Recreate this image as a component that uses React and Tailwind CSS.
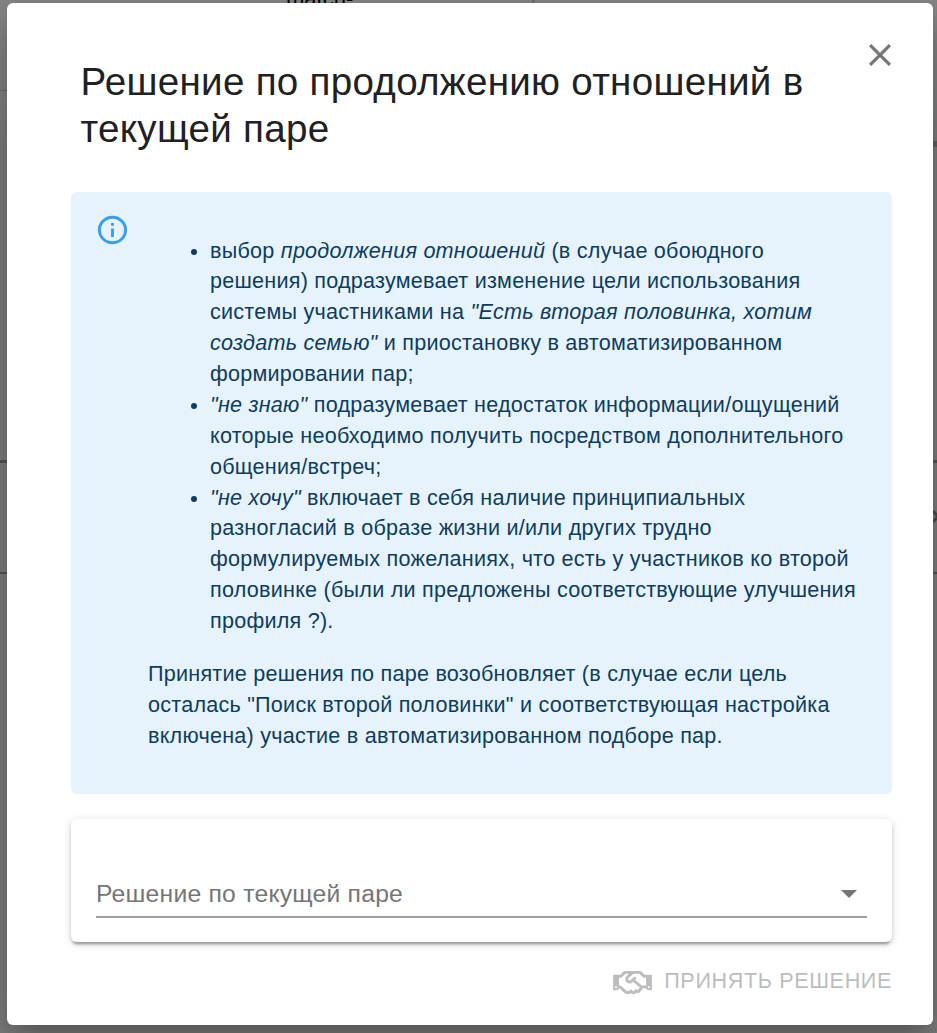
import { FaRegHandshake } from "react-icons/fa";

function Backdrop() {
  return (
    <div aria-hidden="true" className="absolute inset-0 overflow-hidden">
      <div className="absolute left-0 right-0 top-0 h-[147px] bg-gradient-to-b from-[#858585] to-[#7b7b7b]" />
      <div className="absolute left-0 top-[90px] h-px w-2 bg-[#696969]" />
      <div className="absolute left-[286px] top-[-12px] text-[22px] leading-[22px] text-black">match-</div>
      <div className="absolute left-[532px] top-0 h-1 w-[3px] bg-[#707070]" />
      <div className="absolute right-0 top-[141px] h-[6px] w-2 bg-[#606060]" />
      <div className="absolute left-0 right-0 top-[460px] h-[3px] bg-[#525252]" />
      <div className="absolute left-0 right-0 top-[572px] h-[2px] bg-[#505050]" />
      <svg className="absolute right-[-2px] top-[508px] h-[17px] w-[7px]" viewBox="0 0 7 17" fill="none">
        <path d="M1 3L6 8.500L1 14" stroke="#4a4a4a" strokeWidth="3" />
      </svg>
    </div>
  );
}

function InfoMessage() {
  return (
    <section className="flex h-[602px] rounded-md bg-[#e6f3fd] pl-[24px] text-[21.6px] leading-[30.87px] tracking-[0.231px] text-[#0e3c61]">
      <svg className="mt-[21px] h-[34px] w-[35px] shrink-0" viewBox="0 0 24 24" preserveAspectRatio="none" fill="#379ff3">
        <path d="M11 7h2v2h-2V7zm0 4h2v6h-2v-6zm1-9C6.480 2 2 6.480 2 12s4.480 10 10 10 10-4.480 10-10S17.520 2 12 2zm0 18c-4.410 0-8-3.590-8-8s3.590-8 8-8 8 3.590 8 8-3.590 8-8 8z" />
      </svg>
      <div className="ml-[18px] whitespace-nowrap pt-[43.6px]">
        <ul className="list-disc pl-[62px] marker:text-[20px]">
          <li>
            выбор <em>продолжения отношений</em> (в случае обоюдного<br />
            решения) подразумевает изменение цели использования<br />
            системы участниками на <em>"Есть вторая половинка, хотим<br />
            создать семью"</em> и приостановку в автоматизированном<br />
            формировании пар;
          </li>
          <li>
            <em>"не знаю"</em> подразумевает недостаток информации/ощущений<br />
            которые необходимо получить посредством дополнительного<br />
            общения/встреч;
          </li>
          <li>
            <em>"не хочу"</em> включает в себя наличие принципиальных<br />
            разногласий в образе жизни и/или других трудно<br />
            формулируемых пожеланиях, что есть у участников ко второй<br />
            половинке (были ли предложены соответствующие улучшения<br />
            профиля ?).
          </li>
        </ul>
        <p className="mt-[22.1px]">
          Принятие решения по паре возобновляет (в случае если цель<br />
          осталась "Поиск второй половинки" и соответствующая настройка<br />
          включена) участие в автоматизированном подборе пар.
        </p>
      </div>
    </section>
  );
}

function DecisionSelect() {
  return (
    <div className="mt-[25px] h-[123px] rounded-md bg-white px-[25px] pt-[53px] shadow-[0_5px_2px_-3px_rgba(0,0,0,0.2),0_3px_3px_rgba(0,0,0,0.14),0_2px_8px_rgba(0,0,0,0.16)]">
      <button type="button" className="flex h-[46px] w-full items-center justify-between border-b-2 border-[#a0a0a0] pr-[10.5px] text-[24.7px] leading-[36px] tracking-[0.231px] text-[#757575]">
        <span className="whitespace-nowrap">Решение по текущей паре</span>
        <svg className="h-[8px] w-[16px]" viewBox="0 0 16 8" fill="#757575">
          <path d="M0 0h16L8 8z" />
        </svg>
      </button>
    </div>
  );
}

export default function App() {
  return (
    <main className="relative h-[1033px] w-[937px] overflow-hidden bg-[#7b7b7b] pl-[7px] pt-[3px] font-['Liberation_Sans',Arial,sans-serif]">
      <Backdrop />
      <div role="dialog" className="relative h-[1022px] w-[925.5px] rounded-md bg-white pl-[64px] pr-[40.5px] shadow-[0_17px_23px_-11px_rgba(0,0,0,0.2),0_14px_40px_3px_rgba(0,0,0,0.2)]">
        <header className="flex h-[189px] justify-between pl-[9.5px] pt-[55px]">
          <h1 className="whitespace-nowrap text-[38.6px] leading-[47px] tracking-[0.28px] text-[#212121]">
            Решение по продолжению отношений в<br />текущей паре
          </h1>
          <button type="button" aria-label="Закрыть" className="mr-[1.5px] mt-[-14px] h-[22px] w-[22px] shrink-0">
            <svg className="h-[22px] w-[22px]" viewBox="5 5 14 14" fill="#757575">
              <path d="M19 6.410L17.590 5 12 10.590 6.410 5 5 6.410 10.590 12 5 17.590 6.410 19 12 13.410 17.590 19 19 17.590 13.410 12z" />
            </svg>
          </button>
        </header>
        <InfoMessage />
        <DecisionSelect />
        <footer className="mt-[23px] flex justify-end">
          <button type="button" disabled className="flex h-[32px] items-center gap-[12.5px] text-[21.6px] leading-[32px] tracking-[0.617px] text-[#bdbdbd]">
            <FaRegHandshake className="mt-[2px] h-[31px] w-[39px]" />
            <span className="whitespace-nowrap">ПРИНЯТЬ РЕШЕНИЕ</span>
          </button>
        </footer>
      </div>
    </main>
  );
}
